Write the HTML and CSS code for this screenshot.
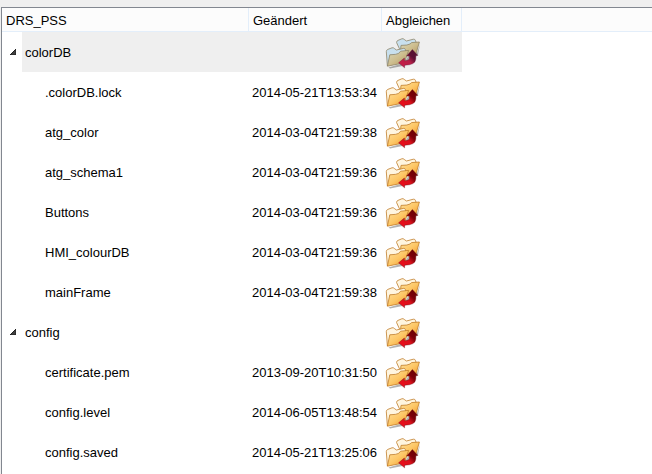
FILE: index.html
```html
<!DOCTYPE html>
<html lang="de">

<head>
  <meta charset="UTF-8">
  <title>DRS_PSS</title>
  <link rel="stylesheet" href="styles.css">
</head>
<body>

  <svg class="sprite" width="0" height="0" aria-hidden="true">
    <linearGradient id="folderFill" x1="0" y1="0" x2="1" y2="1">
      <stop offset="0" stop-color="#ffe09a"/>
      <stop offset="0.5" stop-color="#fdc766"/>
      <stop offset="1" stop-color="#f09420"/>
    </linearGradient>
    <linearGradient id="folderFillSelected" x1="0" y1="0" x2="1" y2="1">
      <stop offset="0" stop-color="#d8d8ba"/>
      <stop offset="0.5" stop-color="#cdbd8e"/>
      <stop offset="1" stop-color="#ae9058"/>
    </linearGradient>
    <linearGradient id="arrowFill" x1="0" y1="1" x2="1" y2="0">
      <stop offset="0" stop-color="#f00c1c"/>
      <stop offset="0.45" stop-color="#dc101c"/>
      <stop offset="0.65" stop-color="#7a0008"/>
      <stop offset="1" stop-color="#640004"/>
    </linearGradient>
    <linearGradient id="arrowFillSelected" x1="0" y1="1" x2="1" y2="0">
      <stop offset="0" stop-color="#cc1c48"/>
      <stop offset="0.45" stop-color="#b82048"/>
      <stop offset="0.65" stop-color="#5c1034"/>
      <stop offset="1" stop-color="#501030"/>
    </linearGradient>
    <symbol id="sync" viewBox="0 0 36 34">
      <path class="shadow" d="M3.5 31.4 L19 27 L24 19 L32 17.6 L35 8 L33 19 L20 29.4 L5 32.4 Z"/>
      <path class="paper" d="M15 14 L11.6 6.6 Q11.4 5 13 4.4 L16.8 2.8 Q18.2 2.3 19.2 3.4 L21.4 5 L28.4 3.2 Q30 3 30.4 4.4 L31.4 7 L23 14 Z"/>
      <path class="face" d="M15.4 16 L16 9.4 Q23 9.4 25 8 L26.6 6.6 L34.4 6 L31 18 L20 20.4 Z"/>
      <path class="paper" d="M2.4 30 L1.3 15.6 Q1.3 14 2.8 13.4 L7 11.8 Q8.4 11.4 9.4 12.5 L11.4 14 L18.6 12.4 Q20 12.2 20.4 13.6 L21 16 L8 23 Z"/>
      <path class="face" d="M2.4 30.2 L4.8 18.8 Q12 18.6 13.6 17.4 L15.6 15.2 L23.6 14.4 L19.4 26.8 Z"/>
      <path class="arrow" d="M27.4 13.6 L32.8 19.4 L30.8 19.6 L30.8 23 Q30.6 29 19.6 29.2 L19.6 31.8 L13.6 26.8 L19.4 22 L19.4 24.8 Q24.4 24.6 24.4 22.6 L24.4 20 L21.6 20 Z"/>
    </symbol>
  </svg>

  <div class="panel">
    <table class="tree">
      <thead>
        <tr>
          <th class="col-name">DRS_PSS</th>
          <th class="col-date">Geändert</th>
          <th class="col-sync">Abgleichen</th>
          <th></th>
        </tr>
      </thead>
      <tbody>
        <tr class="selected">
          <td><div class="node"><button class="toggle" aria-label="colorDB einklappen"><svg width="6" height="6" viewBox="0 0 6 6"><path d="M6 0 V6 H0 Z"/></svg></button><span class="label">colorDB</span></div></td>
          <td></td>
          <td><svg class="sync"><use href="#sync"/></svg></td>
          <td></td>
        </tr>
        <tr>
          <td class="child">.colorDB.lock</td>
          <td>2014-05-21T13:53:34</td>
          <td><svg class="sync"><use href="#sync"/></svg></td>
          <td></td>
        </tr>
        <tr>
          <td class="child">atg_color</td>
          <td>2014-03-04T21:59:38</td>
          <td><svg class="sync"><use href="#sync"/></svg></td>
          <td></td>
        </tr>
        <tr>
          <td class="child">atg_schema1</td>
          <td>2014-03-04T21:59:36</td>
          <td><svg class="sync"><use href="#sync"/></svg></td>
          <td></td>
        </tr>
        <tr>
          <td class="child">Buttons</td>
          <td>2014-03-04T21:59:36</td>
          <td><svg class="sync"><use href="#sync"/></svg></td>
          <td></td>
        </tr>
        <tr>
          <td class="child">HMI_colourDB</td>
          <td>2014-03-04T21:59:36</td>
          <td><svg class="sync"><use href="#sync"/></svg></td>
          <td></td>
        </tr>
        <tr>
          <td class="child">mainFrame</td>
          <td>2014-03-04T21:59:38</td>
          <td><svg class="sync"><use href="#sync"/></svg></td>
          <td></td>
        </tr>
        <tr>
          <td><div class="node"><button class="toggle" aria-label="config einklappen"><svg width="6" height="6" viewBox="0 0 6 6"><path d="M6 0 V6 H0 Z"/></svg></button><span class="label">config</span></div></td>
          <td></td>
          <td><svg class="sync"><use href="#sync"/></svg></td>
          <td></td>
        </tr>
        <tr>
          <td class="child">certificate.pem</td>
          <td>2013-09-20T10:31:50</td>
          <td><svg class="sync"><use href="#sync"/></svg></td>
          <td></td>
        </tr>
        <tr>
          <td class="child">config.level</td>
          <td>2014-06-05T13:48:54</td>
          <td><svg class="sync"><use href="#sync"/></svg></td>
          <td></td>
        </tr>
        <tr>
          <td class="child">config.saved</td>
          <td>2014-05-21T13:25:06</td>
          <td><svg class="sync"><use href="#sync"/></svg></td>
          <td></td>
        </tr>
      </tbody>
    </table>
  </div>

</body>
</html>
```

FILE: styles.css
```css
* {
  box-sizing: border-box;
}

body {
  display: flex;
  flex-direction: column;
  min-height: 100vh;
  margin: 0;
  padding: 7px 0 0 1px;
  background-color: #efefef;
  color: #000;
  font-family: "Liberation Sans", Arial, sans-serif;
  font-size: 13px;
  line-height: 16px;
}

.sprite {
  display: block;
}

.panel {
  flex: 1;
  border-top: 1px solid #828790;
  border-left: 1px solid #828790;
  background-color: #fff;
}

.tree {
  width: 100%;
  table-layout: fixed;
  border-collapse: separate;
  border-spacing: 0;
}

th {
  height: 24px;
  padding: 2px 4px 0;
  background-color: #fcfcfc;
  border-right: 1px solid #e3eefa;
  border-bottom: 1px solid #e3eefa;
  font-weight: normal;
  text-align: left;
}

th:last-child {
  border-right: none;
}

.col-name {
  width: 247px;
}

.col-date {
  width: 133px;
}

.col-sync {
  width: 80px;
}

td {
  height: 40px;
  padding: 2px 3px 0;
  vertical-align: middle;
}

td:first-child {
  padding: 0;
}

td.child:first-child {
  padding: 2px 0 0 43px;
}

.node {
  display: flex;
  height: 40px;
}

.toggle {
  display: flex;
  align-items: center;
  justify-content: center;
  width: 20px;
  padding: 0 0 0 2px;
  border: none;
  background: none;
  cursor: pointer;
}

.toggle path {
  fill: #404040;
  stroke: #202020;
}

.label {
  flex: 1;
  padding: 13px 3px 11px;
}

.selected .label,
.selected td:nth-child(2),
.selected td:nth-child(3) {
  background-color: #efefef;
}

.sync {
  display: block;
  width: 36px;
  height: 34px;
  color: #fff6e0;
  fill: url(#folderFill);
  stroke: #c07c28;
  stroke-width: 0.8;
  --arrow: url(#arrowFill);
  --arrow-edge: #6c0408;
}

.selected .sync {
  color: #c8e0ee;
  fill: url(#folderFillSelected);
  stroke: #8e8468;
  --arrow: url(#arrowFillSelected);
  --arrow-edge: #641438;
}

.paper {
  fill: currentColor;
}

.arrow {
  fill: var(--arrow);
  stroke: var(--arrow-edge);
  stroke-width: 0.4;
}

.shadow {
  fill: #000;
  stroke: none;
  opacity: 0.3;
}
```
